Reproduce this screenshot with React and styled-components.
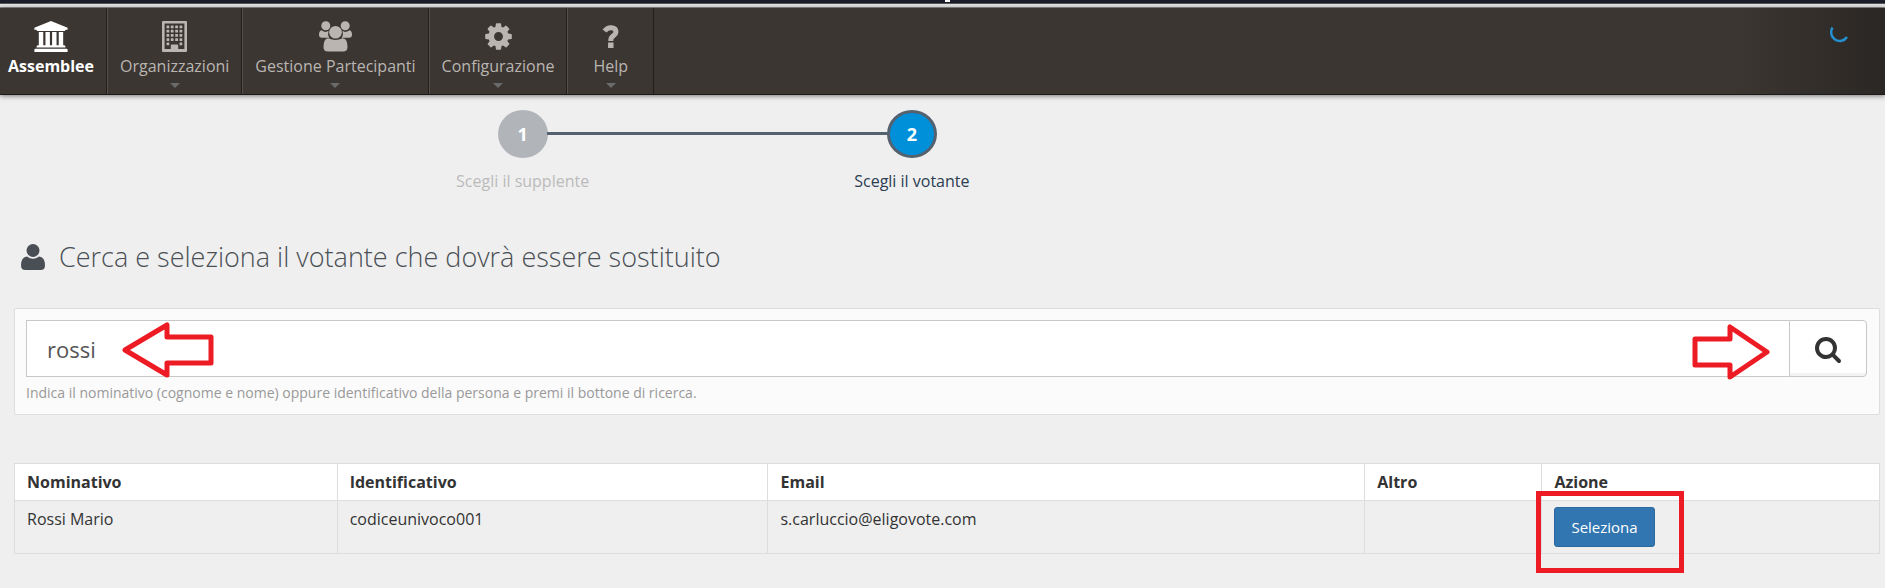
import React from 'react';
import styled, { createGlobalStyle } from 'styled-components';

const GlobalStyle = createGlobalStyle`
  * {
    box-sizing: border-box;
  }
  body {
    margin: 0;
    background: #efefef;
    color: #333;
    font: 16px/24px 'Open Sans', sans-serif;
  }
`;

const UniversityIcon = () => (
  <svg width="34" height="31" viewBox="0 0 1920 1792" fill="#fff" aria-hidden="true">
    <path d="M960 0l960 384v128h-128q0 26-20.5 45t-48.5 19h-1526q-28 0-48.5-19t-20.5-45h-128v-128zM256 640h256v768h128v-768h256v768h128v-768h256v768h128v-768h256v768h59q28 0 48.5 19t20.5 45v64h-1664v-64q0-26 20.5-45t48.5-19h59zM1851 1600q28 0 48.5 19t20.5 45v128h-1920v-128q0-26 20.5-45t48.5-19z" />
  </svg>
);

const BuildingIcon = () => (
  <svg width="25" height="31" viewBox="0 0 25 31" fill="currentColor" aria-hidden="true">
    <path fillRule="evenodd" d="M1 0h23q1 0 1 1v29q0 1-1 1h-23q-1 0-1-1v-29q0-1 1-1zM2.600 2.600v25.400h6.200v-3.500q0-1 1-1h5.400q1 0 1 1v3.500h6.200v-25.400z" />
    {[4.5, 8.8, 13, 17.2].map(y => [4.5, 8.8, 13.2, 17.5].map(x => (
      <rect key={`${x}-${y}`} x={x} y={y} width="2.8" height="2.8" rx="0.6" />
    )))}
    <rect x="4.5" y="21.5" width="2.8" height="2.8" rx="0.6" />
    <rect x="17.5" y="21.5" width="2.8" height="2.8" rx="0.6" />
  </svg>
);

const UsersIcon = () => (
  <svg width="33" height="31" viewBox="0 0 33 31" fill="currentColor" aria-hidden="true">
    <circle cx="6.800" cy="4.800" r="4.500" />
    <circle cx="26.200" cy="4.800" r="4.500" />
    <circle cx="16.500" cy="11.200" r="6.300" />
    <path d="M2.500 9.300q4.300 3 7 .5q-1.200 4 .8 7h-7.300q-3 0-3-3q0-4 2.500-4.500z" />
    <path d="M30.500 9.300q-4.300 3-7 .5q1.200 4-.8 7h7.300q3 0 3-3q0-4-2.500-4.500z" />
    <path d="M9.500 17.300q7 3.200 14 0q5 .2 5 8.700q0 4.500-4.500 4.500h-15q-4.500 0-4.500-4.500q0-8.500 5-8.700z" />
  </svg>
);

const CogIcon = () => (
  <svg width="31" height="31" viewBox="0 0 1792 1792" fill="currentColor" aria-hidden="true">
    <path d="M1152 896q0-106-75-181t-181-75-181 75-75 181 75 181 181 75 181-75 75-181zm512-109v222q0 12-8 23t-20 13l-185 28q-19 54-39 91 35 50 107 138 10 12 10 25t-9 23q-27 37-99 108t-94 71q-12 0-26-9l-138-108q-44 23-91 38-16 136-29 186-7 28-36 28h-222q-14 0-24.500-8.500t-11.500-21.500l-28-184q-49-16-90-37l-141 107q-10 9-25 9-14 0-25-11-126-114-165-168-7-10-7-23 0-12 8-23 15-21 51-66.500t54-70.500q-27-50-41-99l-183-27q-13-2-21-12.500t-8-23.500v-222q0-12 8-23t19-13l186-28q14-46 39-92-40-57-107-138-10-12-10-24 0-10 9-23 26-36 98.500-107.500t94.500-71.500q13 0 26 10l138 107q44-23 91-38 16-136 29-186 7-28 36-28h222q14 0 24.500 8.500t11.500 21.500l28 184q49 16 90 37l142-107q9-9 24-9 13 0 25 10 129 119 165 170 7 8 7 22 0 12-8 23-15 21-51 66.500t-54 70.500q26 50 41 98l183 28q13 2 21 12.500t8 23.500z" />
  </svg>
);

const QuestionIcon = () => (
  <svg width="18" height="31" viewBox="0 0 18 31" fill="none" stroke="currentColor" aria-hidden="true">
    <path strokeWidth="5" d="M2.500 10C6.500 5 14 6 14 11C14 14.500 8.800 14.500 8.800 19V20" />
    <path strokeWidth="5.500" d="M8.800 21.500V27" />
  </svg>
);

const UserIcon = () => (
  <svg width="24" height="26" viewBox="0 0 24 26" fill="#4a4f55" aria-hidden="true">
    <circle cx="12" cy="6.500" r="6.500" />
    <path d="M6 12.500q6 4.500 12 0q6 .5 6 9q0 4.500-4.500 4.500h-15q-4.500 0-4.500-4.500q0-8.500 6-9z" />
  </svg>
);

const SearchIcon = () => (
  <svg width="28" height="28" viewBox="0 0 1792 1792" fill="#333" aria-hidden="true">
    <path d="M1216 832q0-185-131.500-316.500t-316.500-131.500-316.500 131.500-131.500 316.500 131.500 316.500 316.500 131.500 316.500-131.500 131.500-316.500zm512 832q0 52-38 90t-90 38q-54 0-90-38l-343-342q-179 124-399 124-143 0-273.500-55.500t-225-150-150-225-55.500-273.500 55.500-273.500 150-225 225-150 273.500-55.500 273.500 55.500 225 150 150 225 55.500 273.500q0 220-124 399l343 343q37 37 37 90z" />
  </svg>
);

const menu = [
  { label: 'Assemblee', icon: <UniversityIcon />, active: true },
  { label: 'Organizzazioni', icon: <BuildingIcon /> },
  { label: 'Gestione Partecipanti', icon: <UsersIcon /> },
  { label: 'Configurazione', icon: <CogIcon /> },
  { label: 'Help', icon: <QuestionIcon />, wide: true },
];

const App = () => (
  <>
    <GlobalStyle />
    <TopStrip><Cursor /></TopStrip>
    <Navbar>
      <Menu>
        {menu.map(({ label, icon, active, wide }) => (
          <MenuItem key={label} $active={active} $wide={wide}>
            <MenuLink href="#">
              {icon}
              <span>{label}</span>
              {!active && <Caret />}
            </MenuLink>
          </MenuItem>
        ))}
      </Menu>
      <Loader viewBox="0 0 20 20" aria-hidden="true">
        <path d="M3.500 2.500A8 8 0 1 0 18 12" />
      </Loader>
    </Navbar>

    <Steps>
      <Step>
        <StepNumber>1</StepNumber>
        Scegli il supplente
      </Step>
      <Step $active>
        <StepNumber $active>2</StepNumber>
        Scegli il votante
      </Step>
    </Steps>

    <Main>
      <Title>
        <UserIcon />
        Cerca e seleziona il votante che dovrà essere sostituito
      </Title>

      <SearchBox onSubmit={e => e.preventDefault()}>
        <InputGroup>
          <SearchInput id="search" type="text" defaultValue="rossi" />
          <SearchButton type="submit" aria-label="Cerca">
            <SearchIcon />
          </SearchButton>
          <LeftArrow width="92" height="56" viewBox="0 0 92 56" aria-hidden="true">
            <path d="M3 28L45 3V15H89V41H45V53Z" />
          </LeftArrow>
          <RightArrow width="78" height="56" viewBox="0 0 78 56" aria-hidden="true">
            <path d="M75 28L38 3V15H3V41H38V53Z" />
          </RightArrow>
        </InputGroup>
        <Hint htmlFor="search">
          Indica il nominativo (cognome e nome) oppure identificativo della persona e premi il bottone di ricerca.
        </Hint>
      </SearchBox>

      <Table>
        <colgroup>
          <Col $width="17.3%" />
          <Col $width="23.1%" />
          <Col $width="32%" />
          <Col $width="9.5%" />
          <Col />
        </colgroup>
        <thead>
          <tr>
            <Th>Nominativo</Th>
            <Th>Identificativo</Th>
            <Th>Email</Th>
            <Th>Altro</Th>
            <Th>Azione</Th>
          </tr>
        </thead>
        <tbody>
          <tr>
            <Td>Rossi Mario</Td>
            <Td>codiceunivoco001</Td>
            <Td>s.carluccio@eligovote.com</Td>
            <Td />
            <Td>
              <Action>
                <SelectButton type="button">Seleziona</SelectButton>
                <Highlight />
              </Action>
            </Td>
          </tr>
        </tbody>
      </Table>
    </Main>
  </>
);

export default App;

const TopStrip = styled.div`
  height: 8px;
  display: flex;
  justify-content: center;
  background: linear-gradient(#1b1e2a 3px, #55565c 3px, #55565c 4px, #e2e2e2 4px, #e2e2e2 7px, #8b8b8b 7px);
`;

const Cursor = styled.span`
  width: 5px;
  height: 2px;
  margin-left: 10px;
  background: #fff;
`;

const Navbar = styled.nav`
  display: flex;
  justify-content: space-between;
  height: 87px;
  background: linear-gradient(90deg, #3b3632 92%, #2b2724);
  border-bottom: 1px solid #1f1b1b;
  box-shadow: 0 1px 5px rgba(0, 0, 0, 0.5);
`;

const Menu = styled.ul`
  display: flex;
  margin: 0;
  padding: 0;
  list-style: none;
`;

const MenuItem = styled.li`
  padding: 0 ${p => (p.$wide ? '25px' : '12px')};
  padding-left: ${p => p.$active && '8px'};
  border-right: 1px solid #211e1c;
  border-left: ${p => (p.$active ? '0' : '1px solid #54504d')};
  color: ${p => (p.$active ? '#fff' : '#bab5b1')};
  font-weight: ${p => (p.$active ? 700 : 400)};
`;

const MenuLink = styled.a`
  display: flex;
  flex-direction: column;
  align-items: center;
  padding-top: 13px;
  color: inherit;
  text-decoration: none;

  span {
    margin-top: 2px;
  }
`;

const Caret = styled.i`
  margin-top: 5px;
  border: 5px solid transparent;
  border-top-color: #6b6b6b;
  border-bottom: 0;
`;

const Loader = styled.svg`
  width: 20px;
  height: 20px;
  margin: 17px 36px 0 0;
  fill: none;
  stroke: #2490d0;
  stroke-width: 2.5;
`;

const Steps = styled.ol`
  display: flex;
  margin: 15px 0 0;
  padding: 0 0 0 17.4%;
  list-style: none;
`;

const Step = styled.li`
  position: relative;
  width: 25%;
  display: flex;
  flex-direction: column;
  align-items: center;
  gap: 11px;
  color: ${p => (p.$active ? '#2b3d53' : '#bbb')};

  &:not(:first-child)::before {
    content: '';
    position: absolute;
    top: 22px;
    right: calc(50% + 24px);
    width: calc(100% - 48px);
    height: 3px;
    background: #54616f;
  }
`;

const StepNumber = styled.span`
  position: relative;
  display: flex;
  align-items: center;
  justify-content: center;
  width: 50px;
  height: 48px;
  border: 3px solid ${p => (p.$active ? '#54616f' : '#b1b4b9')};
  border-radius: 50%;
  background: ${p => (p.$active ? '#0090d9' : '#b1b4b9')};
  color: #fff;
  font-size: 18px;
  font-weight: 700;
`;

const Main = styled.main`
  padding: 0 5px 36px 14px;
`;

const Title = styled.h1`
  display: flex;
  align-items: center;
  gap: 14px;
  margin: 44px 0 31px;
  padding-left: 7px;
  color: #4a4f55;
  font-size: 27px;
  font-weight: 300;
  line-height: 40px;
`;

const SearchBox = styled.form`
  padding: 11px 12px 11px 11px;
  border: 1px solid #ddd;
  border-radius: 2px;
  background: #fbfbfb;
`;

const InputGroup = styled.div`
  position: relative;
  display: flex;
`;

const SearchInput = styled.input`
  flex: 1;
  height: 57px;
  padding: 0 20px;
  border: 1px solid #c8c8c8;
  border-right: 0;
  background: #fff;
  color: #555;
  font: 22px 'Open Sans', sans-serif;
`;

const SearchButton = styled.button`
  display: flex;
  align-items: center;
  justify-content: center;
  width: 78px;
  border: 1px solid #c8c8c8;
  border-radius: 0 4px 4px 0;
  background: #fff;
  box-shadow: inset 0 -3px 0 #f3f3f3;
`;

const Pointer = styled.svg`
  position: absolute;
  fill: none;
  stroke: #ed1c24;
  stroke-width: 5;
  stroke-linejoin: round;
`;

const LeftArrow = styled(Pointer)`
  top: 2px;
  left: 96px;
`;

const RightArrow = styled(Pointer)`
  top: 4px;
  right: 97px;
`;

const Hint = styled.label`
  display: block;
  margin-top: 6px;
  color: #999;
  font-size: 14px;
  line-height: 20px;
`;

const Table = styled.table`
  width: 100%;
  margin-top: 48px;
  border-collapse: collapse;
  table-layout: fixed;
`;

const Col = styled.col`
  width: ${p => p.$width};
`;

const Th = styled.th`
  padding: 6px 12px;
  border: 1px solid #ddd;
  background: #fff;
  text-align: left;
`;

const Td = styled.td`
  padding: 6px 12px;
  border: 1px solid #ddd;
  vertical-align: top;
`;

const Action = styled.div`
  position: relative;
  display: inline-flex;
`;

const SelectButton = styled.button`
  padding: 9px 16px;
  border: 1px solid #2b689f;
  border-radius: 3px;
  background: #3276b1;
  color: #fff;
  font: 15px/20px 'Open Sans', sans-serif;
`;

const Highlight = styled.span`
  position: absolute;
  top: -16px;
  left: -18px;
  width: 148px;
  height: 82px;
  border: 5px solid #ed1c24;
  pointer-events: none;
`;
